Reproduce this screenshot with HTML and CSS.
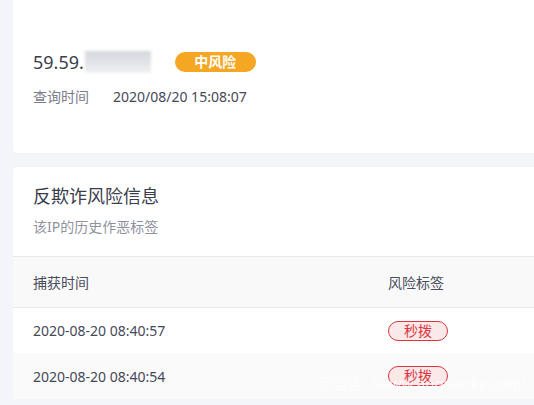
FILE: index.html
```html
<!DOCTYPE html>
<html lang="zh-CN">
<head>
  <meta charset="UTF-8">
  <title>IP风险查询</title>
  <link rel="stylesheet" href="styles.css">
</head>
<body>

<div class="card summary">
  <div class="ip-row">
    <span class="ip">59.59.</span>
    <span class="ip-mask"></span>
    <span class="level">中风险</span>
  </div>
  <div class="query-row">
    <span class="label">查询时间</span>
    <span class="value">2020/08/20 15:08:07</span>
  </div>
</div>

<div class="card detail">
  <div class="detail-head">
    <h2>反欺诈风险信息</h2>
    <p>该IP的历史作恶标签</p>
  </div>
  <div class="table">
    <div class="tr th">
      <div>捕获时间</div>
      <div>风险标签</div>
    </div>
    <div class="tr">
      <div>2020-08-20 08:40:57</div>
      <div><span class="tag">秒拨</span></div>
    </div>
    <div class="tr odd">
      <div>2020-08-20 08:40:54</div>
      <div><span class="tag">秒拨</span></div>
    </div>
  </div>
</div>

<div class="watermark">安全客（www.anquanke.com）</div>

</body>
</html>
```

FILE: styles.css
```css
html, body {
  margin: 0;
  padding: 0;
  overflow: hidden;
}
body {
  font-family: "Noto Sans", "Noto Sans CJK SC", sans-serif;
  background: #f3f5fa;
  padding-left: 13px;
  position: relative;
  height: 405px;
}
.card {
  background: white;
  margin-right: -20px;
  border-radius: 4px;
}
.summary {
  height: 153px;
  box-sizing: border-box;
  padding: 48px 20px 0;
  border-radius: 0 0 4px 4px;
}
.ip-row {
  display: flex;
  align-items: center;
  height: 28px;
}
.ip {
  font-size: 18px;
  color: #3a3d4b;
}
.ip-mask {
  width: 66px;
  height: 22px;
  margin-left: 1px;
  background: linear-gradient(#d6d7dc, #e4e5e9 60%, #f0f1f3);
  filter: blur(1.5px);
}
.level {
  margin-left: 24px;
  width: 81px;
  height: 20px;
  line-height: 20px;
  border-radius: 10px;
  background: #f5a623;
  color: white;
  font-size: 14px;
  font-weight: bold;
  text-align: center;
}
.query-row {
  display: flex;
  margin-top: 10px;
  font-size: 14px;
  line-height: 22px;
}
.label {
  color: #7a7d88;
  width: 80px;
}
.value {
  color: #454857;
}
.detail {
  margin-top: 14px;
}
.detail-head {
  padding: 16px 20px 0;
  height: 73px;
}
.detail-head h2 {
  margin: 0;
  font-size: 18px;
  font-weight: normal;
  line-height: 26px;
  color: #3a3d4b;
}
.detail-head p {
  margin: 8px 0 0;
  font-size: 14px;
  line-height: 20px;
  color: #8f929c;
}
.tr {
  display: grid;
  grid-template-columns: 355px 1fr;
  padding-left: 20px;
  height: 45px;
  align-items: center;
  font-size: 14px;
  color: #454857;
}
.th {
  height: 50px;
  background: #f9f9fa;
  border-top: 1px solid #e8e9ec;
  border-bottom: 1px solid #e8e9ec;
  color: #4a4d5a;
}
.odd {
  background: #fafafa;
  height: 46px;
}
.tag {
  display: inline-block;
  width: 58px;
  height: 18px;
  line-height: 18px;
  border: 1px solid #d9363e;
  border-radius: 10px;
  background: #fbe8e9;
  color: #d9363e;
  text-align: center;
}
.watermark {
  position: absolute;
  left: 318px;
  top: 372px;
  font-size: 15px;
  color: rgba(255, 255, 255, 0.75);
  white-space: nowrap;
}
```
